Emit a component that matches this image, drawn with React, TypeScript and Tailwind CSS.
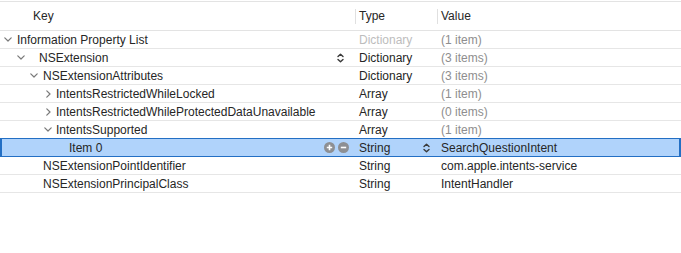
import React from 'react';

type Row = {
  key: string;
  pad: string;
  chev?: 'down' | 'right';
  chevBox?: string;
  type: string;
  value: string;
  typeDim?: boolean;
  valueDim?: boolean;
  keyStepper?: boolean;
  plusMinus?: boolean;
  typeStepper?: boolean;
  selected?: boolean;
};

const rows: Row[] = [
  { key: 'Information Property List', pad: 'pl-[4px]', chev: 'down', chevBox: 'w-[13px]', type: 'Dictionary', value: '(1 item)', typeDim: true, valueDim: true },
  { key: 'NSExtension', pad: 'pl-[17px]', chev: 'down', chevBox: 'w-[22px]', type: 'Dictionary', value: '(3 items)', valueDim: true, keyStepper: true },
  { key: 'NSExtensionAttributes', pad: 'pl-[30px]', chev: 'down', chevBox: 'w-[13px]', type: 'Dictionary', value: '(3 items)', valueDim: true },
  { key: 'IntentsRestrictedWhileLocked', pad: 'pl-[46px]', chev: 'right', chevBox: 'w-[10px]', type: 'Array', value: '(1 item)', valueDim: true },
  { key: 'IntentsRestrictedWhileProtectedDataUnavailable', pad: 'pl-[46px]', chev: 'right', chevBox: 'w-[10px]', type: 'Array', value: '(0 items)', valueDim: true },
  { key: 'IntentsSupported', pad: 'pl-[44px]', chev: 'down', chevBox: 'w-[12px]', type: 'Array', value: '(1 item)', valueDim: true },
  { key: 'Item 0', pad: 'pl-[69px]', type: 'String', value: 'SearchQuestionIntent', plusMinus: true, typeStepper: true, selected: true },
  { key: 'NSExtensionPointIdentifier', pad: 'pl-[43px]', type: 'String', value: 'com.apple.intents-service' },
  { key: 'NSExtensionPrincipalClass', pad: 'pl-[43px]', type: 'String', value: 'IntentHandler' },
];

const ChevronDown = () => (
  <svg width="8" height="5" viewBox="0 0 8 5" className="shrink-0">
    <path d="M0.8 0.8 L4 4 L7.2 0.8" fill="none" stroke="#7a7a7a" strokeWidth="1.2" strokeLinecap="round" strokeLinejoin="round" />
  </svg>
);

const ChevronRight = () => (
  <svg width="5" height="8" viewBox="0 0 5 8" className="shrink-0">
    <path d="M0.8 0.8 L4 4 L0.8 7.2" fill="none" stroke="#7a7a7a" strokeWidth="1.2" strokeLinecap="round" strokeLinejoin="round" />
  </svg>
);

const Stepper = () => (
  <svg width="7" height="10" viewBox="0 0 7 10" className="shrink-0">
    <path d="M1 3.6 L3.5 1.2 L6 3.6 M1 6.4 L3.5 8.8 L6 6.4" fill="none" stroke="#3a3a3a" strokeWidth="1.4" strokeLinecap="round" strokeLinejoin="round" />
  </svg>
);

const RoundBtn = ({ plus }: { plus?: boolean }) => (
  <svg width="11" height="11" viewBox="0 0 11 11" className="shrink-0">
    <circle cx="5.5" cy="5.5" r="5.5" fill="#8d8f93" />
    <path d={plus ? 'M2.8 5.5 H8.2 M5.5 2.8 V8.2' : 'M2.8 5.5 H8.2'} stroke="#fff" strokeWidth="1.6" />
  </svg>
);

export default function App() {
  return (
    <div className="w-[681px] h-[253px] bg-white text-[12px] text-[#262626] overflow-hidden" style={{ fontFamily: '"Liberation Sans", Arial, sans-serif' }}>
      <div className="mt-[1px] h-[30px] border-y border-[#e3e3e3] flex items-center">
        <div className="w-[355px] pl-[33px]">Key</div>
        <div className="w-[82px] flex items-center">
          <div className="w-px h-[15px] bg-[#e0e0e0]" />
          <span className="ml-[3px]">Type</span>
        </div>
        <div className="flex-1 flex items-center">
          <div className="w-px h-[15px] bg-[#e0e0e0]" />
          <span className="ml-[3px]">Value</span>
        </div>
      </div>
      {rows.map((r) => (
        <div
          key={r.key}
          className={
            r.selected
              ? 'relative -mt-px h-[19px] flex items-center bg-[#b0d3fb] border-y-[1.5px] border-x-2 border-[#236fc4]'
              : 'h-[18px] flex items-center border-b border-[#e6e6e6]'
          }
        >
          <div className={`w-[355px] flex items-center ${r.pad} ${r.selected ? '-ml-[2px] pr-[6px]' : 'pr-[11px]'}`}>
            {r.chev && (
              <div className={`${r.chevBox} flex items-center`}>
                {r.chev === 'down' ? <ChevronDown /> : <ChevronRight />}
              </div>
            )}
            <span className="flex-1 whitespace-nowrap">{r.key}</span>
            {r.keyStepper && <Stepper />}
            {r.plusMinus && (
              <div className="flex gap-[3px]">
                <RoundBtn plus />
                <RoundBtn />
              </div>
            )}
          </div>
          <div className="w-[82px] pl-[4px] pr-[7px] flex items-center">
            <span className={`flex-1 ${r.typeDim ? 'text-[#bdbdbd]' : ''}`}>{r.type}</span>
            {r.typeStepper && <Stepper />}
          </div>
          <div className={`flex-1 pl-[4px] whitespace-nowrap ${r.valueDim ? 'text-[#8e8e8e]' : ''}`}>{r.value}</div>
        </div>
      ))}
    </div>
  );
}
